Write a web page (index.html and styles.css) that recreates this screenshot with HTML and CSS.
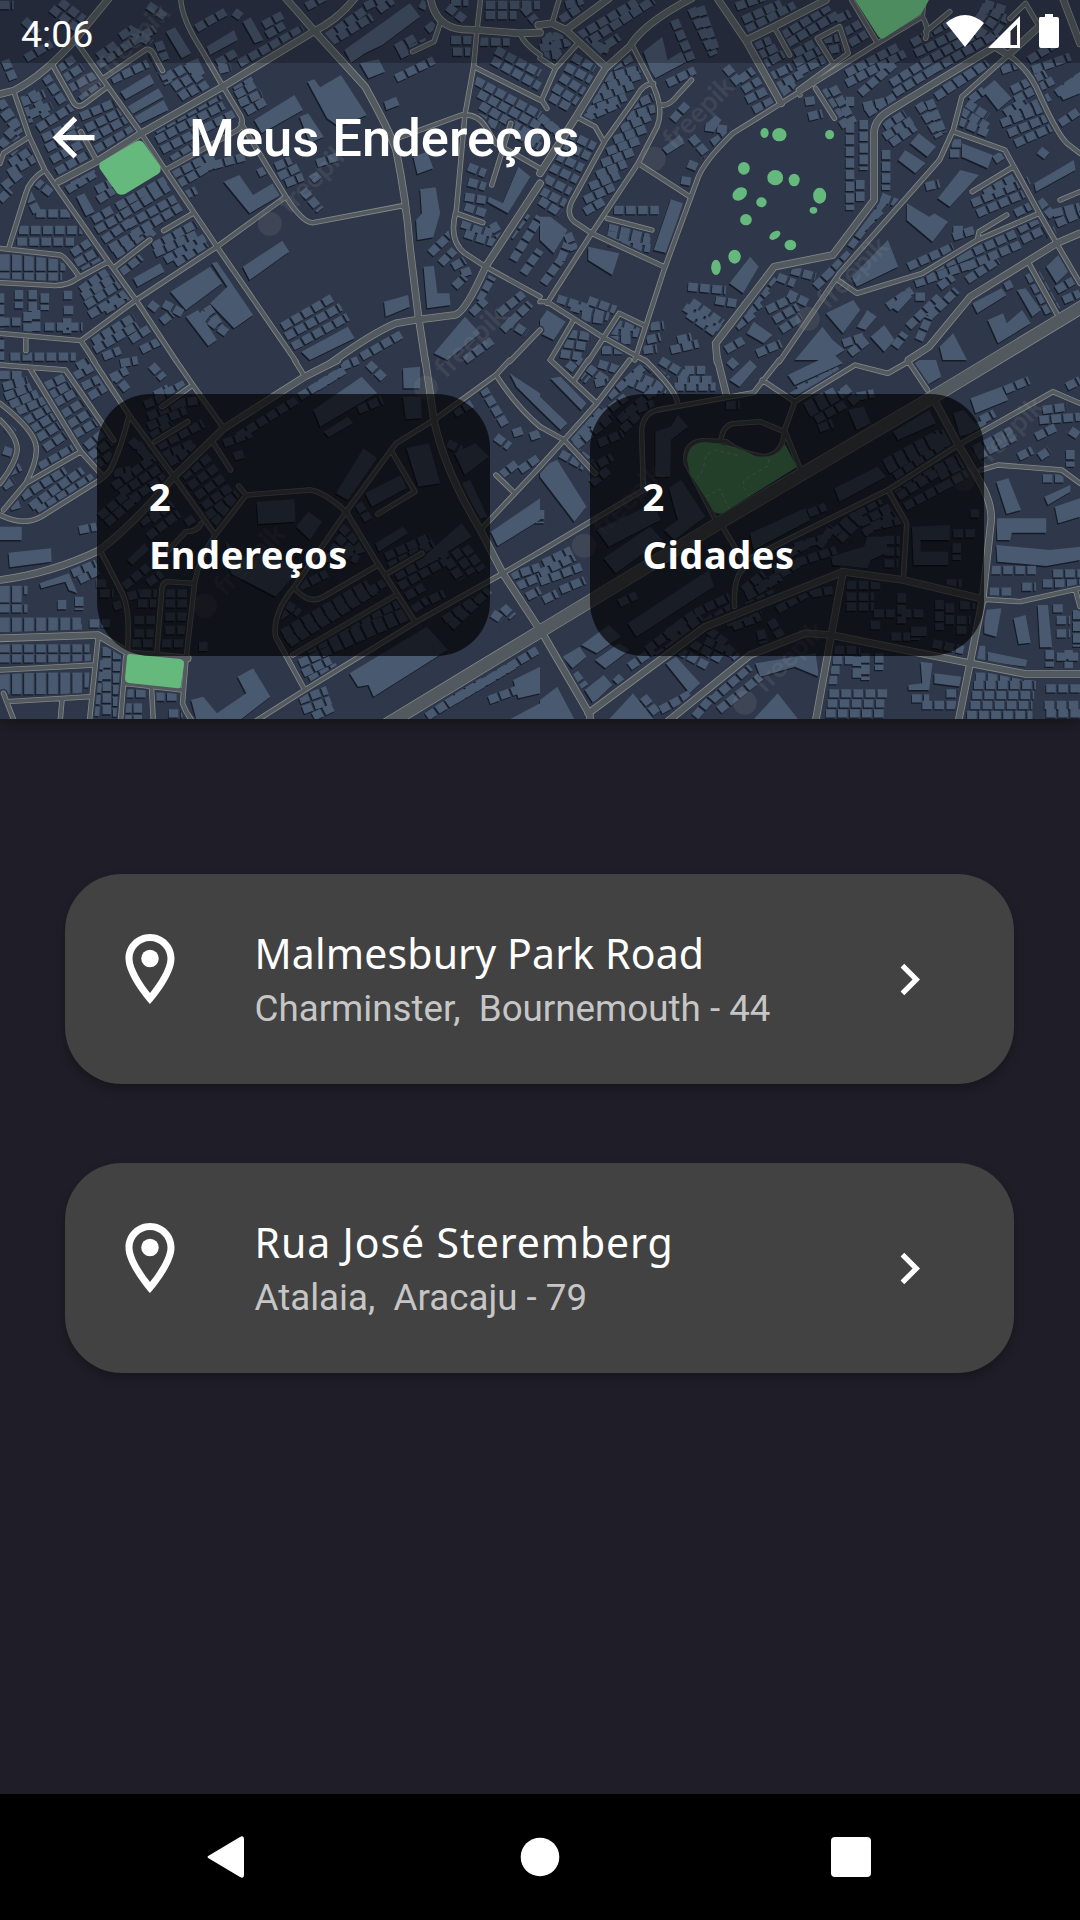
FILE: index.html
```html
<!DOCTYPE html>
<html lang="pt-BR">
<head>
<meta charset="utf-8">
<title>Meus Endereços</title>
<link rel="stylesheet" href="styles.css">
</head>
<body>
<div class="screen">
<header class="hero">
<svg class="map" viewBox="0 0 1080 719" aria-hidden="true">
<defs>
<g id="mark"><circle cx="-12" cy="-8" r="12"/><text x="8">freepik</text></g>
<g id="homes">
<g transform="scale(.34439 .33333)">
<path d="M0 15H40M150 25L235 95M175 5L245 60M70 60L110 100M75 175L150 130M350 110L380 90L440 130M355 145L450 85M430 15L480 50M285 170L340 130M280 200L350 150M165 210L215 175M180 240L240 200M195 270L275 225M235 300L300 250M15 180L40 240M325 240L430 190M440 150L490 250M460 125L480 180M130 225L185 310M60 290L85 370M90 275L135 350M60 310L130 280M85 345L150 315M110 385L210 320M125 415L220 370M135 445L235 390M150 480L240 430M165 515L270 455M235 350L350 300M250 385L370 325M265 415L380 350M275 450L390 385M485 215L545 300M515 200L570 285M545 190L600 270M570 85L655 35M680 35L700 50M630 190L690 155M695 190L880 85M765 75L820 45M775 105L825 75M635 210L670 200M675 260L730 230M685 285L745 250M695 310L760 280M715 335L775 300M450 390L640 285M455 420L650 315M470 450L680 340M500 480L560 440M500 525L620 465M515 555L630 485M530 590L570 570M585 505L710 470M800 500L845 480M810 530L870 500M830 550L880 530M750 520L790 500M880 570L930 630M905 540L930 520M920 490L980 470M195 570L275 520M205 550L270 505M280 570L330 545M285 600L330 570M340 620L480 540M355 645L490 560M370 675L510 595M385 705L525 620M400 735L450 690M270 660L330 625M280 690L350 650M300 720L380 665M320 745L400 700M335 765L410 720M0 300L50 380M10 335L60 400M20 390L70 440M0 420L45 460M30 490L90 450M25 520L110 470M10 560L60 520M0 600L30 570M100 540L150 580M80 580L110 640M105 640H215M55 690H240M50 725H215M0 775H175M0 800H190M0 830H180M210 760L270 720M220 790L290 750M240 815L300 780M350 820L410 770M445 740L570 670M450 760L575 700M480 780L600 710M510 790L600 730M55 870V925M95 870V935M130 880V930M0 880V1080M0 965H60M80 935V1000M105 930V1000M185 885H210M185 930H220M195 955V1000M130 980H240M235 870L310 815M240 890L335 830M250 915L350 850M260 945L365 880M305 930L380 890M435 910L460 930M475 910L530 940M470 965L500 940M270 1025L390 950M275 1050L400 975M380 1020L440 980M410 1050L470 1020M30 1070H220M300 1070L350 1050M580 940L660 1000M600 920L640 980M820 980L970 890M830 1010L990 920M850 1040L1010 950M1050 1070L1170 1000M950 110L1060 30M955 130L1080 50M1060 20L1140 -20M1100 30L1140 0M890 20L960 -20M1150 235L1260 180M1150 145L1210 110M1160 165L1240 125M1240 90L1290 50M1220 10L1240 20M1300 20L1350 60M1310 5H1360M1310 120H1370M1315 155H1370M1390 125H1480M1410 45H1500M1410 15H1568M1520 20L1568 80M1430 180L1568 260M1440 150L1568 220M1380 240L1568 345M1390 280L1568 380M1395 315L1568 420M1385 350L1450 380M1500 400L1568 440M1360 500L1410 520M1360 545L1410 560M1350 590L1410 600M1350 620L1410 640M1350 700L1440 730M1340 670L1430 700M1430 670L1460 720M1480 710L1530 640M1490 780L1568 650M1520 820L1568 750M1250 760L1310 700M1280 790L1320 750M1315 800L1350 780M1340 820L1370 810M1320 860L1350 830M1390 900L1430 830M1370 940L1410 900M1450 940L1520 880M1460 990L1540 910M1470 960L1530 1000M1350 1080L1430 1020"/>
</g>
<g transform="translate(540) scale(.34439 .33333)">
<path d="M5 120L80 100M0 145L90 125M0 170L70 160M20 100L60 180M60 60L120 20M75 15L125 0M110 110L280 5M120 140L300 20M150 130L200 150M165 155L230 110M210 80L330 0M95 170L160 205M75 200L150 240M60 230L130 275M40 260L110 305M30 290L90 325M390 60L440 180M440 25L505 165M465 20L510 150M210 200L290 160M185 235L310 200M165 270L290 225M150 300L270 255M135 335L250 290M130 355L230 310M260 320L330 290M250 350L335 325M235 385L320 350M215 420L310 385M195 455L290 420M180 490L270 455M165 525L250 490M145 560L230 525M130 600L215 560M130 635L190 600M0 350L60 400M20 370L80 420M80 400L160 440M60 430L145 470M45 465L125 505M30 500L110 540M15 535L90 575M0 570L75 610M0 600L60 640M370 250L450 210M385 360L430 310M480 380L550 390M500 430L545 400M440 410L490 470M430 490L465 505M410 540L440 545M215 630H345M200 680L320 700M195 705L320 725M200 725L320 745M80 700L100 750M10 850L60 780M60 780L80 730M50 895L140 925M90 920L200 950M140 900L220 930M120 950L190 960M200 990L290 1000M210 970L290 985M200 1020L270 1020M80 1000L150 1010M70 1030L140 1040M60 1060L120 1070M180 1050H240M320 980L360 975M310 1020L350 1010M300 1050L340 1045M380 1050L460 1030M400 1020L440 1010M540 200L580 250M580 240L620 210M590 270L640 240M600 300L660 270M620 330L680 300M570 20L650 -10M590 60L700 10M600 90L740 15M620 140L670 120M630 170L690 140M640 200L710 160M660 235L730 200M680 265L760 220M700 280L740 250M700 110L840 20M720 130L870 40M740 160L830 110M740 190L830 140M750 215L840 170M820 120L880 110M840 150L890 140M860 60L900 40M880 100L930 70M900 130L950 100M890 220L1040 140M890 250L1060 160M930 280L1030 190M900 290V320M770 305L800 300M780 350L820 340M820 270L890 380M850 260L910 370M1080 130L1200 60M1090 160L1250 80M1110 190L1290 90M1140 210L1330 100M940 320L1020 300M950 340L1030 290M1020 250L1130 180M1030 280L1140 210M1150 290L1300 190M1170 260L1280 180M900 370V630M940 360V510M930 540V610M1005 450V570M990 590L1040 610M1000 380L1060 340M1000 410L1080 360M1020 430L1090 380M1100 310L1160 410M1130 300L1170 400M1240 310L1300 350M1220 330L1300 380M1210 360L1300 400M1195 430H1230M1190 460H1230M1250 300L1290 270M1280 20L1360 60M1270 40L1340 90M1240 70L1320 120M1290 10L1350 30M1340 210L1400 190M1370 270L1470 220M1380 300L1490 240M1350 340L1410 300M1370 350L1480 290M1340 370L1470 320M1360 400L1480 350M1380 430L1490 380M1420 180L1500 130M1430 210L1540 170M1500 280L1568 230M1510 370L1568 330M1450 450L1475 470M1320 480L1350 460M1120 560L1160 550M1290 580L1400 520M1255 610L1420 540M1270 640L1430 570M1380 640L1440 610M1450 600L1490 650M1500 670L1568 640M1490 640L1568 620M1390 690L1460 650M1400 720L1480 680M1070 800L1200 740M1080 830L1230 770M1090 850L1260 790M1230 770L1380 700M1240 800L1400 730M1200 690L1230 690M1200 710L1260 690M1240 840L1330 780M1010 920L1080 870M1070 980L1160 890M1090 890H1120M1130 950L1210 870M1160 860L1200 830M1030 1040L1060 1000M1100 1020L1130 950M1420 820L1480 940M1440 820L1500 930M1500 870L1568 830M1520 900L1568 880M1350 860L1370 850M1470 700L1500 690M690 830L740 850M730 810L800 830M830 830L900 760M800 860L850 810M900 740L1000 600M920 700L990 630M640 880L680 830M620 910L660 870M600 940L640 910M570 980L620 940M430 860L540 870M510 900L570 910M420 920L530 990M430 940L520 1005M440 905L530 970M660 930L740 890M680 960L750 920M700 990L760 950M720 880L780 910M540 1050L590 1020M630 1060L700 1030M880 1030L940 1010M900 1060L950 1020"/>
</g>
<g transform="translate(0 360) scale(.34439 .33333)">
<path d="M0 45H70M10 80L80 60M15 110L90 80M30 135L110 100M50 155L130 120M70 185L150 140M90 210L170 160M110 235L180 190M130 265L210 210M115 320L220 260M130 80L190 50M140 110L210 70M160 130L230 90M180 165L250 120M200 195L270 150M215 225L290 180M240 80L300 50M215 50L270 20M225 20L260 0M260 110L310 80M290 70L370 30M330 40L370 90M350 10L400 0M440 15L475 55M480 100L540 70M450 105L490 85M250 260L310 210M260 290L330 240M275 320L330 280M65 410L190 330M90 440L240 330M110 455L270 350M30 440L60 430M20 340L60 320M10 380L40 360M20 200L40 220M10 270L40 280M290 470L370 400M310 490L400 410M330 380L450 290M350 400L470 320M380 420L480 350M330 340L380 330M380 240L430 290M400 250L440 310M420 135L480 110M430 170L520 130M430 200L540 150M440 230L500 190M460 260L590 190M470 290L560 250M490 310L570 260M510 130L590 120M650 250L730 220M690 230L860 120M680 290L710 280M870 110L980 40M920 80L1000 30M990 20L1040 0M1070 10L1120 60M530 350L610 290M550 380L630 320M570 410L650 350M590 440L670 380M600 470L690 400M620 490L700 420M410 490L460 450M430 530L520 460M440 480L500 430M540 490L570 470M360 680L430 620M370 710L410 700M430 670L470 640M280 670H310M290 700H330M330 740L360 730M410 700H460M400 730H460M390 780H450M390 820H450M380 850H450M480 700H560M480 730H545M480 770H545M480 810H540M470 850H540M590 845V880M230 510L280 500M210 640L280 610M230 660L290 630M0 690H80M0 715H70M0 745H80M180 720V750M230 710V750M0 785H235M0 805H240M260 790H320M0 865H260M0 895H265M0 950H260M0 970H260M0 990H240M310 860V1070M340 870V1070M290 900L275 1070M360 1000H430M370 1030V1080M400 1030V1080M450 1010H520M490 1060H530M1400 80L1470 200M1370 130L1320 160M1440 230L1480 260M1490 220L1520 210M1540 230L1568 220M1450 350L1500 310M1510 330L1568 290M1040 150L1110 120M1300 250L1340 270M1040 430L1070 480M990 500L1050 560M980 530L1030 580M960 560L1040 600M930 600L1070 560M870 680L950 640M830 730L870 760M810 770L850 740M1120 590L1250 530M1130 620L1260 550M1150 650L1280 580M1160 680L1300 600M1280 570L1340 660M1320 570L1370 640M1350 560L1400 630M1180 710L1230 680M1200 750L1240 720M1250 720L1290 700M1290 780L1380 720M1310 800L1420 690M820 820L1070 670M840 850L1090 690M830 840L1130 660M920 840L1160 730M890 870L1190 750M870 910L1180 770M880 940L960 900M900 960L980 920M1430 760L1460 780M1460 740L1490 770M1480 650L1568 620M1500 680L1568 650M1530 710L1568 690M870 1020L950 990M880 1050L960 1020M910 1070L970 1040M1240 1070L1400 960M1270 1050L1560 870M1320 1020L1500 910M1420 1020L1500 990"/>
</g>
<g transform="translate(540 360) scale(.34439 .33333)">
<path d="M80 10L140 60M110 0L190 60M170 10L230 30M160 70L200 60M200 110L300 20M250 60L340 100M270 40L370 90M310 10L370 60M350 0L430 50M390 80H510M400 60H500M420 30H480M100 260L210 170M90 240L190 160M110 220L180 140M150 190L250 110M230 180L320 100M250 160L330 130M240 210L290 160M60 280L130 320M90 260L150 310M140 330L210 290M170 250L240 220M150 370L200 330M540 135H580M550 0L570 20M770 140L860 90M780 160L880 100M800 180L890 130M810 205L850 190M880 80L920 130M920 110L970 100M730 110L870 30M750 90L850 40M1000 310L1160 220M1010 330L1180 230M1030 350L1190 250M1140 240L1190 210M1150 260L1210 230M1020 390L1160 310M1040 410L1180 320M1060 440L1170 380M1150 330L1220 290M1160 350L1230 310M1170 380L1240 340M1250 460H1275M1280 180L1320 160M1270 200L1300 190M1260 270L1370 210M1270 290L1380 230M1390 290L1430 270M1450 290L1480 270M1440 230L1500 200M1450 180L1568 170M1460 150L1530 140M1350 90L1420 60M1530 80L1568 60M1540 270V320M1540 210L1568 230M780 460L830 440M810 560L850 500M850 520L920 460M870 540L940 470M920 460L990 420M930 490L1020 440M940 520L1030 460M960 500L1050 480M590 690L650 640M600 710L700 650M640 680L750 610M680 630L860 570M690 600L780 550M740 560L840 530M600 740L680 700M700 720L780 680M690 750L790 690M790 700L850 690M1000 540H1045M1000 575H1045M1000 610H1040M1200 520H1265M1210 550V600M890 675H990M890 710H970M890 740H970M970 760H1030M960 795H990M1050 700V790M1050 760H1115M1180 670H1225M1220 735H1265M1210 780H1250M1210 810H1245M1160 720V810M1190 730V800M1020 830H1075M1090 800V840M1110 800V830M1140 850L1230 870M1310 630H1440M1305 695H1375M1400 680H1440M1460 670H1568M1490 640H1568M1460 355H1520M1490 745H1520M1500 780H1540M1500 820H1540M1500 890H1568M1480 870V920M1535 870V930M1560 750V860M1265 870H1295M1265 890H1295M1265 950H1440M1260 975H1440M1255 1005H1435M1250 1035H1430M1240 1065H1430M1470 985H1568M1465 1035H1568M1470 1060H1568M855 870H930M850 900H910M845 930H870M835 960H870M920 890V960M945 880V960M985 880V930M840 1000H1010M835 1030H1000M830 1060H1000M1080 1015H1130M1110 1035H1210M1180 1000H1225M230 730L280 705M370 820L450 760M380 840L470 770M450 760L550 710M480 790L560 740M310 870L400 800M340 890L420 830M490 810L540 850M540 790L640 750M560 800L640 770M400 870L490 920M440 850L530 900M480 840L560 880M540 860L580 900M640 810L650 850M670 780L700 830M100 940L130 980M220 950L240 970M260 920L330 870M300 1010L340 1060M350 1050L440 1000M500 1020L610 920M520 1050L640 950M450 1070L500 1010M10 610L90 570M0 640L100 590M0 665L120 620M60 690L130 660M10 720L50 700M0 450V490"/>
</g>
</g>
<g id="blocks">
<path transform="scale(.34439 .33333)" d="M1000 150L1190 10 1220 50 1110 135 1060 160 1020 188ZM893 245L912 238 930 262 990 225 1065 345 985 380 950 355ZM738 360L855 285 880 330 760 400ZM870 350L895 340 940 410 900 430ZM650 545L695 525 735 585 800 545 815 585 725 640ZM705 800L820 722 840 755 725 840ZM495 875L610 800 645 850 540 930ZM615 790L630 785 735 945 680 985 610 910 660 860ZM350 275L435 222 448 250 365 298ZM370 320L460 265 475 290 385 342ZM390 350L475 300 490 330 405 372ZM482 95L508 82 555 160 528 175ZM600 140L680 90 690 120 610 165ZM705 65L728 52 765 120 740 130ZM222 590L245 580 275 635 250 648ZM1220 568L1265 562 1278 640 1258 712 1212 720 1208 660 1225 640ZM1230 800L1260 798 1270 880 1305 880 1308 915 1240 925ZM1115 905L1185 885 1190 920 1120 950ZM1420 590L1460 610 1505 500 1540 530 1475 640 1415 605ZM875 1055L1010 980 1030 1015 900 1080ZM1045 190L1100 178 1118 215 1070 235ZM540 950L575 930 630 1020 605 1038ZM1200 470L1240 455 1258 505 1212 522ZM1115 305L1150 290 1160 315 1122 330ZM387 835L465 790 478 815 400 860ZM1260 1060L1350 950 1395 1000 1300 1080ZM540 190L575 175 595 220 565 240Z"/>
<path transform="translate(540) scale(.34439 .33333)" d="M300 155L355 110 370 180 410 155 425 185 335 235 320 210ZM330 750L380 598 415 610 370 760ZM140 740L230 760 210 825 140 780ZM0 720L0 650 30 650 80 690 40 760ZM550 850L610 770 635 800 590 880ZM905 830L1010 720 1040 800 920 860ZM1065 610L1130 650 1145 640 1185 665 1140 725 1065 660ZM1155 595L1220 510 1275 525 1190 620ZM1225 430L1315 465 1300 505 1225 470ZM1285 270L1320 240 1370 295 1330 330ZM1040 480L1060 450 1120 490 1090 520ZM1075 430L1100 400 1150 440 1125 470ZM1435 550L1550 480 1555 510 1440 575ZM1300 960L1345 940 1355 970 1400 930 1425 970 1330 1030ZM830 940L910 900 930 930 880 1000ZM740 1080L820 980 850 1020 885 1050 840 1080ZM1385 870L1410 865 1455 930 1430 950ZM1255 910L1340 865 1355 885 1270 940ZM1160 1040L1200 1000 1240 1080H1170ZM1470 800L1510 760 1540 810 1500 850ZM960 1010L1000 975 1030 1020 1000 1055ZM0 960L20 930 75 965 40 1020 0 1000ZM600 1000L620 965 675 1005 650 1030ZM355 445L405 405 420 430 370 462ZM1020 920L1060 870 1080 890 1040 935ZM920 980L950 930 978 950 945 990ZM1500 270L1568 215V280L1520 300ZM485 370L510 345 527 360 505 397Z"/>
<path transform="translate(0 360) scale(.34439 .33333)" d="M0 500H63V540H0ZM25 578L148 565 150 605 28 622ZM115 670L200 640 225 700 200 690 190 665 120 685ZM555 1020L590 1010 630 1060 715 1000 690 950 735 925 785 1010 700 1078H570ZM1015 940L1240 800 1300 870 1085 1010 1070 975 1040 980ZM1425 515L1568 415V480L1445 558ZM745 425L855 418 858 485 750 492ZM860 500L895 455 935 485 900 540ZM655 545L720 600 790 570 860 640 800 710 670 640ZM975 400L1055 265 1095 295 1010 420ZM1180 265L1245 250 1278 370 1215 380ZM1060 400L1165 345 1180 385 1080 440ZM910 150L1050 50 1095 100 930 200ZM1170 25L1220 20V85L1172 85ZM1170 110H1222L1225 175 1178 178ZM1340 370L1365 360 1415 470 1385 480ZM1490 960L1568 920V1000L1505 1015ZM1230 590L1340 490 1370 530 1240 615ZM1480 40L1568 100V150L1500 80ZM370 600L420 550 432 570 385 615ZM1090 550L1170 500 1185 520 1100 575ZM1320 280L1380 250 1420 290 1350 345ZM940 215L1010 170 1025 190 955 232ZM1440 1100L1568 1030V1100Z"/>
<path transform="translate(540 360) scale(.34439 .33333)" d="M0 320L50 300 135 440 100 485 0 350ZM30 55L60 50 135 130 120 150ZM0 110L80 190 60 210 0 150ZM335 215L380 200 400 165 430 200 380 240 378 350H335ZM360 510L400 480 375 385 410 360 480 470 390 540ZM165 510L330 430 350 480 200 560ZM185 595L320 500 355 540 220 640ZM610 520L770 445 785 480 620 570ZM255 790L490 630 505 680 280 830ZM120 855L200 795 235 830 165 880ZM160 900L230 850 260 870 190 925ZM65 890L115 860 135 890 95 925ZM130 990L185 945 210 975 155 1030ZM0 1020L50 980 100 1078H0ZM200 1078L270 1000 330 1078ZM365 910L395 890 465 970 435 1000ZM625 910L800 880 810 950 740 920 640 950ZM855 385L980 320 1005 350 870 425ZM845 590L940 560 950 530 1010 530 1005 580 960 600 950 625 850 615ZM1080 500L1190 495V540H1105V575H1185V615H1085ZM1325 475H1470V518H1370L1365 540H1328ZM1325 555L1480 570 1568 560V600L1470 618 1328 605ZM1325 365L1360 355 1397 450 1355 462ZM1445 735H1475L1487 862H1452ZM1290 750L1340 745 1325 830 1290 820ZM1375 775L1410 765 1425 848 1390 852ZM1300 875L1415 900 1410 920 1300 905ZM720 45L850 -20 880 10 740 75ZM1025 215L1130 150 1150 190 1040 240ZM1250 115L1340 80 1360 120 1265 160ZM1105 905L1140 910 1130 990H1070V975L1110 970ZM1145 940L1225 950V980L1145 970ZM1465 410L1540 375V395L1475 435ZM895 150L940 140 960 190 920 210ZM1200 160L1230 150 1280 210 1220 230ZM1495 440L1568 415V470L1505 490ZM550 60L610 0 630 20 580 80ZM620 1078L690 1000 750 1078ZM1075 0H1150L1165 50 1125 75Z"/>
</g>
<g id="streets">
<path transform="scale(.34439 .33333)" d="M225 130L300 240 410 400 480 510 630 740 860 1085M300 235L425 148Q440 145 450 170L472 212M150 190L215 310Q228 325 245 312L310 262M40 275L85 410 130 510 315 785 395 900 510 1080M85 410L10 460 0 490M130 510Q85 540 75 580L25 745M280 480L235 395M480 510L690 390Q710 375 700 350L645 255 580 140Q530 60 525 0M700 370L830 590Q880 670 910 668L1165 618Q1175 620 1180 640M830 590L630 740 395 900 235 1022 275 1085M235 1022L0 1000M75 1015V1052M1140 420L1340 345Q1385 340 1410 380L1440 430 1568 505M0 745L175 765Q190 770 230 830M0 848L160 857Q200 855 225 835L315 785M335 800L435 720M475 692L560 640M1395 0L1385 90 1375 200 1350 345 1325 630Q1300 720 1350 760L1410 800M1510 100Q1520 130 1568 165M1375 200L1568 300M1280 65L1260 125 1198 155M1325 640L1402 668M1428 555L1483 370M1410 800L1568 890M1568 990L1480 1085"/>
<path transform="translate(540) scale(.34439 .33333)" d="M0 78L35 70 75 85M35 70L55 0M270 140L330 260Q360 330 340 380L285 490 150 700 20 910M330 250Q300 250 280 290L190 420 100 590Q70 640 100 665L150 700 360 800M105 350L160 380 185 425M285 490L435 590M350 315Q375 320 400 285L440 240M110 130L45 205 5 300 20 325M45 205L0 175M700 310L980 130 1110 50 1115 0M905 0L980 130M700 310L560 400Q480 480 460 530L360 810 275 1080M685 90L725 165M850 190L805 115 870 80 895 160 750 270 755 285M800 265L855 355M1110 50Q1130 80 1120 115M1120 95L1190 35M1360 165L1225 290 1200 390 1160 480 870 820 695 1085M1360 165L1450 80 1410 10 1365 55M1360 165Q1410 200 1440 260 1500 400 1530 430L1568 460M1200 395L1350 450 1450 640 1500 730 1568 850M1375 500L1255 575M1450 640L1270 720 1275 695 1355 645M865 840L920 880 1110 820 1270 720M1420 790L1500 940M20 905L180 1010 310 1085M95 965L30 1080M300 975L230 940 140 1085M195 655L325 690M1510 600L1568 575M0 905L20 905"/>
<path transform="translate(0 360) scale(.34439 .33333)" d="M0 15L190 30 330 240M90 30L235 275 300 350M270 0L375 165 505 350 625 525M375 165Q350 270 320 330 305 350 290 360L120 470Q70 500 0 465M235 275L75 370 10 450M0 130Q100 210 105 260 110 300 75 370M0 180Q50 230 50 270 45 310 0 370M510 0L560 75 650 205M560 75L470 140M885 50L855 0M450 245L545 185M620 250L670 330M625 525L715 405 900 390Q940 395 1005 455L1150 250 1260 180M715 405L693 378M585 490Q575 515 540 515L490 570M625 525Q575 600 565 670L540 900 530 1030Q540 1060 560 1085M565 670L485 665Q470 670 470 690L455 880M290 570L350 690Q380 740 370 870M285 830L260 1080M0 930L275 915M20 1025L265 1010M180 1020L175 1080M10 1000L40 1080M365 890L350 1080M440 985L445 1080M360 970L530 990M1260 180L1440 45 1480 0M1440 45Q1500 140 1568 200M1395 510L1568 320M1490 395L1440 345M1568 575L1460 640 1210 785 885 990 740 1085M1005 455L1090 600 1205 785M1135 270L1205 395 1097 462M1005 455L855 680Q790 760 800 830L885 990M860 690Q900 735 940 710L1090 620M1125 640L1225 580M1150 705L850 885"/>
<path transform="translate(540 360) scale(.34439 .33333)" d="M0 575L300 390 295 210Q300 160 340 150L620 98 695 0M400 130Q395 90 305 0M645 60L740 125 915 15 1010 40 1070 5 1125 90M740 125L710 210 755 325M0 320L70 240 165 130 260 0M165 130L30 0M100 60L140 0M70 240L0 200M70 240L160 340M525 245Q530 190 570 190L640 185 710 215Q705 285 650 290 580 280 540 245L470 242Q415 250 425 310L510 480M530 500L600 620Q560 640 565 740M1215 255L1010 390 600 600M1215 255L1490 95 1568 130M1280 330L1330 315 1515 330 1568 370M1010 390L1065 490 1055 655M1290 718L1395 725 1568 685M1555 690L1568 740"/>
</g>
<g id="avenues">
<path transform="scale(.34439 .33333)" d="M320 -10L225 110Q130 225 40 272L0 282M170 545L280 485 410 400 650 258 910 95Q980 60 1030 -5M830 -5L915 95 1060 260Q1130 390 1150 450 1180 600 1190 740L1215 950 1235 1085M1250 -5Q1265 80 1340 88L1385 90 1510 100 1568 98M1568 550L1410 800Q1350 940 1320 945 1200 960 1150 970 1080 1000 960 1090"/>
<path transform="translate(540) scale(.34439 .33333)" d="M-5 75L35 70 75 90 200 -5M75 90L190 200M440 -5Q300 70 260 140L190 205 105 350 0 520M515 -5L600 125 700 310M600 120L680 80 830 0M1520 0L1568 130M1360 165L1320 140 1160 240 1010 335Q970 360 970 400V600L850 765 680 800 510 1030 515 1085M1360 165L1470 60M1568 700L1500 730 1250 890 1130 1040 1070 1080"/>
<path transform="translate(0 360) scale(.34439 .33333)" d="M980 0L885 50 650 205 505 350Q380 500 290 570 150 640 0 660M0 835L285 825 375 880 545 895M1235 0L1260 180Q1290 330 1395 510L1460 640 1568 810"/>
<path transform="translate(540 360) scale(.34439 .33333)" d="M540 100L515 -5M1140 110L1215 255Q1260 330 1290 390 1312 440 1310 480L1285 720 1215 1085M880 635L1055 660 1290 718M140 1060L480 800 880 635 845 830 800 1085M370 1085L610 885 770 820 845 825 1250 910 1410 942H1568M10 825L145 1065V1090"/>
</g>
<path id="highway" d="M1085 305L933 397 719 523 540 631.500 376 731"/>
</defs>
<rect width="1080" height="719" fill="#2f374a"/>
<use href="#homes" class="homes-shade" x="-.8" y="1.300"/>
<use href="#blocks" class="blocks-shade" x="-1" y="1.500"/>
<use href="#homes" class="homes"/>
<use href="#blocks" class="blocks"/>
<use href="#streets" class="street-bed"/><use href="#avenues" class="avenue-bed"/><use href="#highway" class="highway-bed"/>
<use href="#streets" class="street-edge"/><use href="#avenues" class="avenue-edge"/><use href="#highway" class="highway-edge"/>
<use href="#streets" class="street"/><use href="#avenues" class="avenue"/><use href="#highway" class="highway"/>
<g class="green">
<path d="M101 162L135 142Q139 139 143 142L160 166Q162 171 158 174L125 194Q120 196 117 193L100 169Q98 165 101 162Z"/>
<path d="M855 0H929L921 14 884 38Q881 40 878 36Z"/>
<path d="M130 654L180 659Q184 660 184 664L181 685Q181 689 176 688L129 683Q125 682 125 678L127 657Q127 654 130 654Z"/>
<path d="M687 460Q688 443 705 442 735 444 755 456 775 460 785 444L797 467 723 513Q714 516 710 505L690 474Z"/>
<g transform="translate(540) scale(.34439 .33333)">
<ellipse cx="652" cy="399" rx="12" ry="15"/><ellipse cx="695" cy="404" rx="21" ry="20"/><ellipse cx="841" cy="404" rx="13" ry="14"/><ellipse cx="592" cy="505" rx="17" ry="19"/><ellipse cx="683" cy="533" rx="23" ry="23"/><ellipse cx="738" cy="540" rx="16" ry="19"/><ellipse cx="580" cy="582" rx="23" ry="18" transform="rotate(-40 580 582)"/><ellipse cx="643" cy="607" rx="15" ry="15"/><ellipse cx="598" cy="659" rx="17" ry="17"/><ellipse cx="812" cy="587" rx="19" ry="24"/><ellipse cx="794" cy="631" rx="11" ry="10"/><ellipse cx="682" cy="706" rx="18" ry="11" transform="rotate(-35 682 706)"/><ellipse cx="727" cy="735" rx="17" ry="16"/><ellipse cx="565" cy="770" rx="18" ry="21"/><ellipse cx="511" cy="802" rx="14" ry="23"/>
</g>
</g>
<path class="trail" d="M697 479L703 470 706 455 715 450 740 456M769 459L768 466 744 480 743 487 750 497M706 497L720 489 729 509"/>
<use href="#mark" class="mark" transform="translate(284 221) rotate(-45)"/>
<use href="#mark" class="mark" transform="translate(668 156) rotate(-45)"/>
<use href="#mark" class="mark" transform="translate(822 316) rotate(-45)"/>
<use href="#mark" class="mark" transform="translate(104 82) rotate(-45)"/>
<use href="#mark" class="mark" transform="translate(440 385) rotate(-45)"/>
<use href="#mark" class="mark" transform="translate(219 603) rotate(-45)"/>
<use href="#mark" class="mark" transform="translate(759 700) rotate(-45)"/>
<use href="#mark" class="mark" transform="translate(978 476) rotate(-45)"/>
<use href="#mark" class="mark" transform="translate(598 543) rotate(-45)"/>
</svg>
<div class="hero-content">
<div class="status-bar">
<span class="clock">4:06</span>
<svg class="status-icons" viewBox="0 0 116 36"><path d="M2 9Q21-7 40 9L21 33ZM44 34L76 2V34ZM96 3H101V0H109V3H113Q115 3 115 5V32Q115 34 113 34H97Q95 34 95 32V5Q95 3 96 3Z"/><path class="signal-gap" d="M66.500 17L73 10.500V31H66.500Z"/></svg>
</div>
<div class="toolbar">
<svg class="back" viewBox="0 0 24 24"><path d="M20 11H7.830l5.590-5.590L12 4l-8 8 8 8 1.410-1.410L7.830 13H20z"/></svg>
<h1 class="title">Meus Endereços</h1>
</div>
<div class="stats">
<div class="stat"><span class="stat-value">2</span><span class="stat-label">Endereços</span></div>
<div class="stat"><span class="stat-value">2</span><span class="stat-label">Cidades</span></div>
</div>
</div>
</header>
<main class="list">
<article class="address">
<svg class="pin" viewBox="0 0 24 24"><path d="M12 2C8.130 2 5 5.130 5 9c0 5.250 7 13 7 13s7-7.750 7-13c0-3.870-3.130-7-7-7zM7 9c0-2.760 2.240-5 5-5s5 2.240 5 5c0 2.880-2.880 7.190-5 9.880C9.920 16.210 7 11.850 7 9z"/><circle cx="12" cy="9" r="2.500"/></svg>
<div class="address-text"><h2 class="street-name">Malmesbury Park Road</h2><p class="place">Charminster,&nbsp; Bournemouth - 44</p></div>
<svg class="chevron" viewBox="0 0 24 24"><path d="M10 6L8.590 7.410 13.170 12l-4.580 4.590L10 18l6-6z"/></svg>
</article>
<article class="address">
<svg class="pin" viewBox="0 0 24 24"><path d="M12 2C8.130 2 5 5.130 5 9c0 5.250 7 13 7 13s7-7.750 7-13c0-3.870-3.130-7-7-7zM7 9c0-2.760 2.240-5 5-5s5 2.240 5 5c0 2.880-2.880 7.190-5 9.880C9.920 16.210 7 11.850 7 9z"/><circle cx="12" cy="9" r="2.500"/></svg>
<div class="address-text"><h2 class="street-name street-name-wide">Rua José Steremberg</h2><p class="place">Atalaia,&nbsp; Aracaju - 79</p></div>
<svg class="chevron" viewBox="0 0 24 24"><path d="M10 6L8.590 7.410 13.170 12l-4.580 4.590L10 18l6-6z"/></svg>
</article>
</main>
<nav class="nav-bar">
<svg class="nav-icon" viewBox="0 0 44 44"><path d="M5 20.500L36 2Q40 0 40 4V40Q40 44 36 42L5 23.500Q2 22 5 20.500Z"/></svg>
<svg class="nav-icon" viewBox="0 0 44 44"><circle cx="22" cy="22" r="19.300"/></svg>
<svg class="nav-icon" viewBox="0 0 44 44"><rect x="2" y="2" width="40" height="40" rx="4"/></svg>
</nav>
</div>
</body>
</html>
```
FILE: styles.css
```css
* { box-sizing: border-box; }
body { margin: 0; background: #1f1d27; color: #fff; font-family: Roboto, sans-serif; }
h1, h2, p { margin: 0; }
svg { display: block; fill: #fff; flex: none; }
.screen { width: 1080px; height: 1920px; display: flex; flex-direction: column; overflow: hidden; }

/* Map header */
.hero { position: relative; height: 719px; flex: none; box-shadow: 0 4px 14px rgba(0, 0, 0, .35); }
.map { position: absolute; inset: 0; width: 1080px; height: 719px; overflow: hidden; }
.map #streets path, .map #avenues path { stroke-linecap: round; stroke-linejoin: round; vector-effect: non-scaling-stroke; }
.homes, .homes-shade { fill: none; stroke-width: 25; stroke-dasharray: 28 7; stroke: #495970; }
.homes-shade { stroke: #151b27; }
.blocks { fill: #495970; }
.blocks-shade { fill: #151b27; }
.street-bed, .avenue-bed, .highway-bed { fill: none; stroke: #2f374a; }
.street-edge, .avenue-edge, .highway-edge { fill: none; stroke: #868887; }
.street, .avenue, .highway { fill: none; stroke: #535a5f; }
.street-bed { stroke-width: 9px; }
.street-edge { stroke-width: 5.400px; }
.street { stroke-width: 3.800px; }
.avenue-bed { stroke-width: 12px; }
.avenue-edge { stroke-width: 7.600px; }
.avenue { stroke-width: 6px; }
.highway-bed { stroke-width: 18px; }
.highway-edge { stroke-width: 13.500px; }
.highway { stroke-width: 12px; }
.green { fill: #66b97d; }
.trail { fill: none; stroke: #a9cfae; stroke-width: 1px; stroke-dasharray: 4 3; }
.mark { fill: #9a9a9a; opacity: .14; font: 700 28px Lato, sans-serif; }
.hero-content { position: relative; height: 100%; display: flex; flex-direction: column; }

.status-bar { height: 63px; padding: 0 20px 0 21px; background: rgba(0, 0, 0, .24); display: flex; justify-content: space-between; align-items: flex-start; }
.clock { font-size: 37.500px; line-height: 44px; padding-top: 12px; }
.status-icons { width: 116px; height: 36px; margin-top: 14px; }
.status-icons .signal-gap { fill: #252b38; }
.toolbar { height: 148px; padding: 0 42px; display: flex; align-items: center; gap: 84px; }
.back { width: 63px; height: 63px; }
.title { font-size: 52.500px; line-height: 62px; font-weight: 500; white-space: nowrap; padding-top: 1px; }
.stats { display: flex; gap: 100px; margin: 183px 96px 0 96.500px; }
.stat { width: 393.500px; height: 262px; padding: 74px 52.500px 0; border-radius: 54px; background: rgba(0, 0, 0, .66); display: flex; flex-direction: column; font: 700 38px/57.500px "Noto Sans", sans-serif; letter-spacing: .55px; }

/* Address cards */
.list { flex: 1; padding: 155px 66px 0 65px; display: flex; flex-direction: column; gap: 79px; }
.address { height: 210px; border-radius: 57px; background: #424242; box-shadow: 0 5px 10px rgba(0, 0, 0, .25); display: flex; align-items: flex-start; }
.pin { width: 84px; height: 84px; margin: 53px 0 0 42.500px; }
.address-text { width: 570px; margin: 50px 0 0 63px; }
.street-name { font: 400 41px/58px "Noto Sans", sans-serif; letter-spacing: .15px; white-space: nowrap; }
.street-name-wide { letter-spacing: .9px; }
.place { font-size: 36.750px; line-height: 48px; padding-top: 3px; color: #c6c6c6; white-space: nowrap; }
.chevron { width: 63px; height: 63px; margin: 74px 0 0 53px; }

.nav-bar { height: 126px; background: #000; padding: 0 207px 0 204px; display: flex; align-items: center; justify-content: space-between; }
.nav-icon { width: 44px; height: 44px; }
.nav-icon:nth-child(2) { margin-left: 2px; }
```
